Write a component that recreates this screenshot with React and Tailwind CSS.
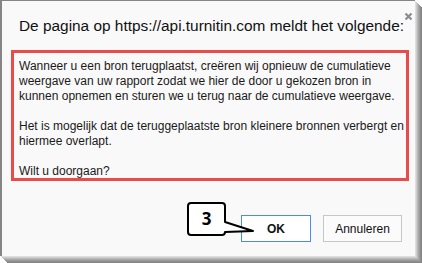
import React from "react";

export default function App() {
  return (
    <div className="w-[422px] h-[263px] bg-white relative overflow-hidden">
      <div
        className="w-[415px] h-[256px] bg-[#f9f9f9] border-l-2 border-t border-[#858585] flex flex-col shadow-[1px_1px_0_#dedede,2px_2px_0_#cdcdcd,3px_3px_0_#bababa,4px_4px_0_#a8a8a8,5px_5px_0_#9a9a9a,6px_6px_0_#8e8e8e,7px_7px_0_#858585]"
        style={{ fontFamily: '"Liberation Sans", Arial, sans-serif' }}
      >
        <div className="flex items-start justify-between pl-[17px] pr-[3px] h-[35px]">
          <div className="pt-[15px] text-[15.4px] leading-[20px] text-[#111] whitespace-nowrap">
            De pagina op https://api.turnitin.com meldt het volgende:
          </div>
          <svg width="9" height="9" viewBox="0 0 9 9" className="mt-[11px] shrink-0">
            <path d="M1.5 1.5 L7.5 7.5 M7.5 1.5 L1.5 7.5" stroke="#8c8c8c" strokeWidth="2.2" />
          </svg>
        </div>
        <div className="ml-[9px] mt-[14px] w-[398px] h-[131px] border-[3px] border-[#e94a4a] pl-[5px] pt-[6px] text-[12px] leading-[15px] text-[#1a1a1a] whitespace-nowrap">
          <p>
            Wanneer u een bron terugplaatst, creëren wij opnieuw de cumulatieve
            <br />
            weergave van uw rapport zodat we hier de door u gekozen bron in
            <br />
            kunnen opnemen en sturen we u terug naar de cumulatieve weergave.
          </p>
          <p className="mt-[15px]">
            Het is mogelijk dat de teruggeplaatste bron kleinere bronnen verbergt en
            <br />
            hiermee overlapt.
          </p>
          <p className="mt-[15px]">Wilt u doorgaan?</p>
        </div>
        <div className="flex justify-end gap-[12px] pr-[13px] mt-[34px]">
          <button className="w-[70px] h-[27px] border border-[#4a8af4] bg-white text-[12px] font-bold text-[#111] flex items-center justify-center">
            OK
          </button>
          <button className="w-[79px] h-[27px] border border-[#c6c6c6] bg-[#fbfbfb] text-[12px] text-[#111] flex items-center justify-center">
            Annuleren
          </button>
        </div>
      </div>
      <div className="absolute left-[186px] top-[201px] w-[72px] h-[40px]">
        <svg width="72" height="40" viewBox="0 0 72 40" className="absolute left-0 top-0">
          <path
            d="M5 2 H36 Q39 2 39 5 V21 L67 30 L39 31 Q39 34 36 34 H5 Q2 34 2 31 V5 Q2 2 5 2 Z"
            fill="#ffffff"
            stroke="#000000"
            strokeWidth="2"
            strokeLinejoin="round"
          />
        </svg>
        <span className="absolute left-[2px] top-[2px] w-[37px] h-[32px] flex items-center justify-center text-[17px] font-bold text-black">
          3
        </span>
      </div>
    </div>
  );
}
